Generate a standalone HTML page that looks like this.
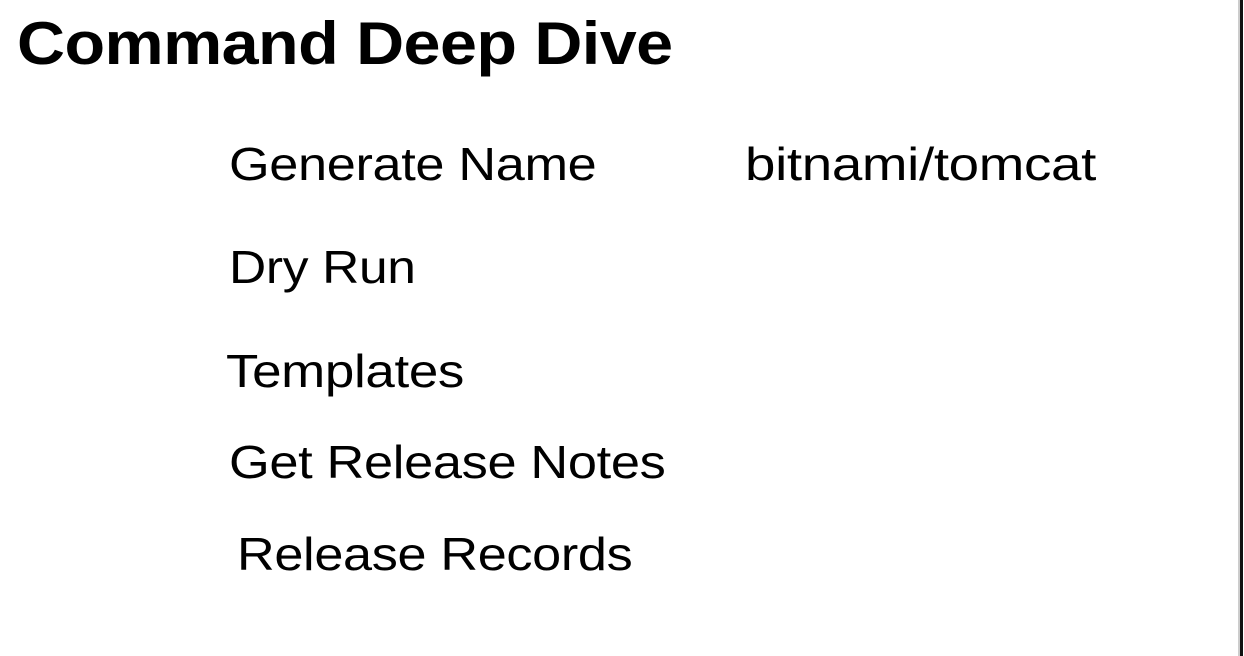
<!DOCTYPE html>
<html><head><style>
html,body{margin:0;padding:0;background:#fff;width:1244px;height:656px;overflow:hidden;position:relative;font-family:"Liberation Sans",Arial,sans-serif;color:#000}
.t{position:absolute;white-space:nowrap;line-height:1;transform-origin:0 0}
.h{font-weight:bold;font-size:60px;left:17px;top:14px;letter-spacing:-0.5px;transform:scaleX(1.108)}
.i{font-size:46px;letter-spacing:-0.3px}
.bar{position:absolute;left:1240px;top:0;width:3px;height:656px;background:#111}
.bar2{position:absolute;left:1238px;top:0;width:2px;height:656px;background:#ccc}
</style></head><body>
<div class="t h">Command Deep Dive</div>
<div class="t i" style="left:229px;top:141px;transform:scaleX(1.136)">Generate Name</div>
<div class="t i" style="left:745px;top:141px;transform:scaleX(1.19)">bitnami/tomcat</div>
<div class="t i" style="left:229px;top:244px;transform:scaleX(1.12)">Dry Run</div>
<div class="t i" style="left:226px;top:348px;transform:scaleX(1.15)">Templates</div>
<div class="t i" style="left:229px;top:439px;transform:scaleX(1.138)">Get Release Notes</div>
<div class="t i" style="left:237px;top:531px;transform:scaleX(1.135)">Release Records</div>
<div class="bar2"></div><div class="bar"></div>
</body></html>
